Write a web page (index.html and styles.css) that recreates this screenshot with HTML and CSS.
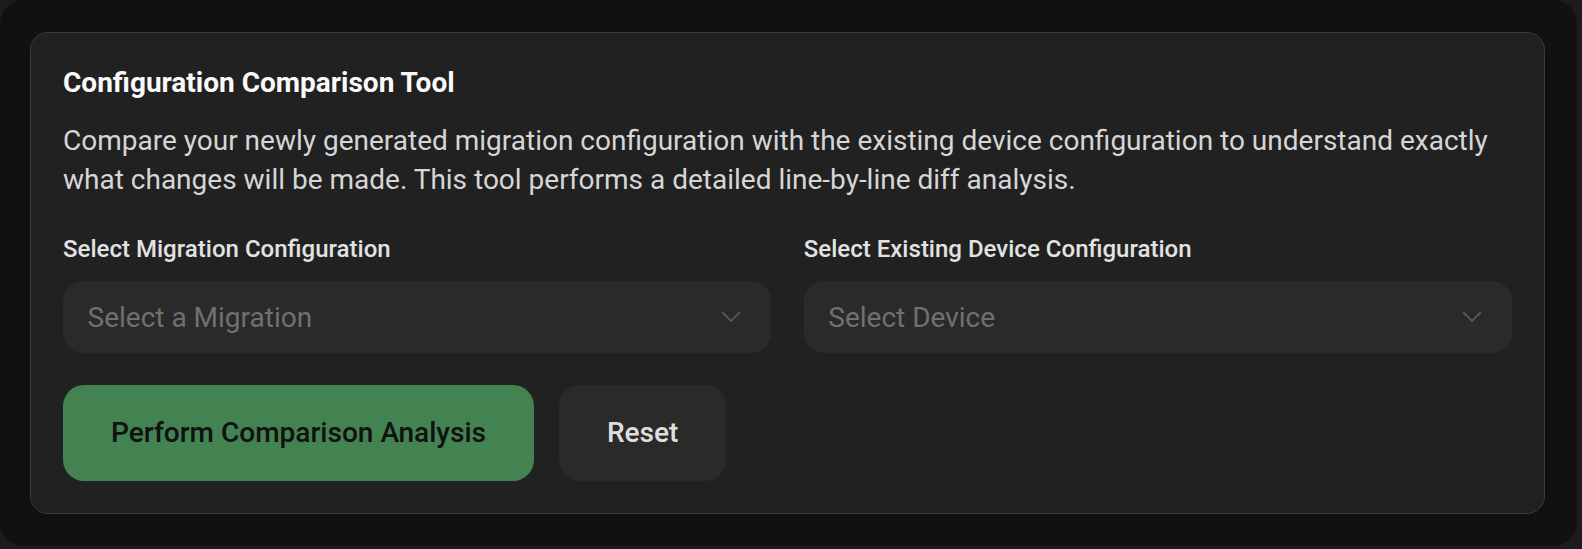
FILE: index.html
```html
<!DOCTYPE html>
<html lang="en">
<head>
<meta charset="utf-8">
<title>Configuration Comparison Tool</title>
<link rel="stylesheet" href="styles.css">
</head>
<body>
<div class="frame">
  <section class="card">
    <h2 class="title">Configuration Comparison Tool</h2>
    <p class="desc">Compare your newly generated migration configuration with the existing device configuration to understand exactly what changes will be made. This tool performs a detailed line-by-line diff analysis.</p>
    <div class="fields">
      <div class="field">
        <label class="label">Select Migration Configuration</label>
        <div class="select">
          <span class="placeholder">Select a Migration</span>
          <svg class="chev" width="20" height="12" viewBox="0 0 20 12"><polyline points="1.5,1.5 10,10 18.5,1.5" fill="none" stroke="#555" stroke-width="2" stroke-linecap="round" stroke-linejoin="round"/></svg>
        </div>
      </div>
      <div class="field">
        <label class="label">Select Existing Device Configuration</label>
        <div class="select">
          <span class="placeholder">Select Device</span>
          <svg class="chev" width="20" height="12" viewBox="0 0 20 12"><polyline points="1.5,1.5 10,10 18.5,1.5" fill="none" stroke="#555" stroke-width="2" stroke-linecap="round" stroke-linejoin="round"/></svg>
        </div>
      </div>
    </div>
    <div class="actions">
      <button class="btn btn-primary">Perform Comparison Analysis</button>
      <button class="btn btn-secondary">Reset</button>
    </div>
  </section>
</div>
</body>
</html>
```
FILE: styles.css
```css
html, body {
  margin: 0;
  padding: 0;
  background: #1c1c1c;
  font-family: Roboto, "Liberation Sans", sans-serif;
}

.frame {
  width: 1577px;
  height: 546px;
  box-sizing: border-box;
  background: #111111;
  border-radius: 24px;
  padding: 32px 32px 32px 30px;
}

.card {
  box-sizing: border-box;
  height: 482px;
  background: #212121;
  border: 1px solid #3b3b3b;
  border-radius: 18px;
  padding: 32px;
}

.title {
  margin: 0;
  font-size: 28px;
  line-height: 36px;
  font-weight: 700;
  color: #fafafa;
}

.desc {
  margin: 20px 0 0;
  font-size: 28px;
  line-height: 39.4px;
  color: #d6d6d6;
}

.fields {
  margin-top: 32.5px;
  display: grid;
  grid-template-columns: 1fr 1fr;
  column-gap: 32.5px;
}

.field {
  display: flex;
  flex-direction: column;
}

.label {
  font-family: "Roboto Medium", Roboto, "Liberation Sans", sans-serif;
  font-size: 24px;
  line-height: 34px;
  font-weight: 500;
  color: #e2e2e2;
}

.select {
  margin-top: 15px;
  height: 71.5px;
  box-sizing: border-box;
  background: #2a2a2a;
  border-radius: 20px;
  padding: 0 30px 0 24.5px;
  display: flex;
  align-items: center;
  justify-content: space-between;
}

.placeholder {
  font-size: 28px;
  color: #707070;
}

.chev {
  display: block;
}

.actions {
  margin-top: 32.5px;
  display: flex;
  gap: 25px;
}

.btn {
  border: none;
  font-family: "Roboto Medium", Roboto, "Liberation Sans", sans-serif;
  font-size: 28px;
  line-height: 40px;
  font-weight: 500;
  padding: 28px 48px;
  border-radius: 21px;
  height: 96px;
  box-sizing: border-box;
}

.btn-primary {
  background: #438351;
  color: #111111;
}

.btn-secondary {
  background: #2a2a2a;
  color: #dedede;
}
```
